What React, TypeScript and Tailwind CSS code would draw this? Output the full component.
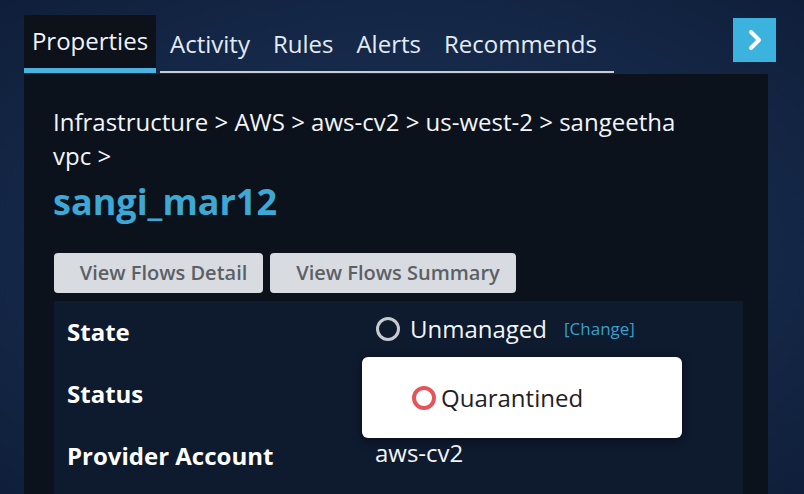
import React from "react";

const font = { fontFamily: '"Open Sans", "Noto Sans", sans-serif' };

export default function App() {
  return (
    <div
      className="w-[804px] h-[494px] overflow-hidden relative bg-[radial-gradient(ellipse_at_center,#1b3157_0%,#152848_60%,#0f1f3a_100%)] pl-[24px] pt-[15px]"
      style={font}
    >
      {/* header row */}
      <div className="flex items-start w-[752px] h-[59px]">
        <div className="flex flex-col w-[132px] h-[59px]">
          <div className="h-[53px] bg-[#0c111a] flex items-center justify-center text-[24px] text-[#f1f4f8] pb-[1px]">
            Properties
          </div>
          <div className="h-[5px] bg-[#4bb3df]" />
        </div>
        <div className="ml-[4px] w-[454px] h-[58px] border-b-[2px] border-[#c9cdd2] flex items-center gap-[23px] pl-[10px] pt-[2px] text-[24px] text-[#e3ebf4]">
          <span>Activity</span>
          <span>Rules</span>
          <span>Alerts</span>
          <span>Recommends</span>
        </div>
        <div className="ml-auto mt-[3px] w-[43px] h-[44px] bg-[#3cb2de] flex items-center justify-center">
          <svg width="18" height="22" viewBox="0 0 18 22">
            <path d="M5 3 L13 11 L5 19" fill="none" stroke="#ffffff" strokeWidth="4" strokeLinecap="round" strokeLinejoin="round" />
          </svg>
        </div>
      </div>

      {/* panel */}
      <div className="w-[744px] h-[420px] bg-[#0c121c] pt-[31px] pl-[29px]">
        <div className="w-[640px] text-[24px] leading-[34px] text-[#f3f5f8]">
          Infrastructure &gt; AWS &gt; aws-cv2 &gt; us-west-2 &gt; sangeetha vpc &gt;
        </div>
        <div className="mt-[7px] text-[36px] leading-[44px] font-bold text-[#3ea8d5]">sangi_mar12</div>
        <div className="mt-[29px] ml-[1px] flex gap-[7px]">
          <div className="w-[209px] h-[40px] rounded-[4px] bg-[#d8dce0] flex items-center justify-center pl-[10px] text-[20px] font-semibold text-[#5c6066]">
            View Flows Detail
          </div>
          <div className="w-[246px] h-[40px] rounded-[4px] bg-[#d8dce0] flex items-center justify-center pl-[10px] text-[20px] font-semibold text-[#5c6066]">
            View Flows Summary
          </div>
        </div>
        <div className="mt-[8px] ml-[1px] w-[689px] h-[200px] bg-[#0e1a2e] relative">
          <div className="flex h-[62px] items-center">
            <div className="w-[309px] pl-[13px] text-[24px] font-bold text-white">State</div>
            <div className="flex items-center pl-[13px] -mt-[6px]">
              <span className="w-[24px] h-[24px] rounded-full border-[3.5px] border-[#c7cbd0]" />
              <span className="ml-[10px] text-[24px] text-[#f3f5f8]">Unmanaged</span>
              <span className="ml-[17px] text-[17px] text-[#3a9fca]">[Change]</span>
            </div>
          </div>
          <div className="flex h-[62px] items-center">
            <div className="w-[309px] pl-[13px] text-[24px] font-bold text-white">Status</div>
          </div>
          <div className="flex h-[62px] items-center">
            <div className="w-[309px] pl-[13px] text-[24px] font-bold text-white">Provider Account</div>
            <div className="pl-[12px] -mt-[6px] text-[24px] text-[#f3f5f8]">aws-cv2</div>
          </div>

          <div className="absolute left-[308px] top-[56px] w-[320px] h-[81px] bg-white rounded-[6px] shadow-[0_2px_8px_rgba(0,0,0,0.5)] flex items-center pl-[50px]">
            <span className="w-[24px] h-[24px] rounded-full border-[4px] border-[#e4545a]" />
            <span className="ml-[5px] text-[24px] text-[#1e2124]">Quarantined</span>
          </div>
        </div>
      </div>
    </div>
  );
}
